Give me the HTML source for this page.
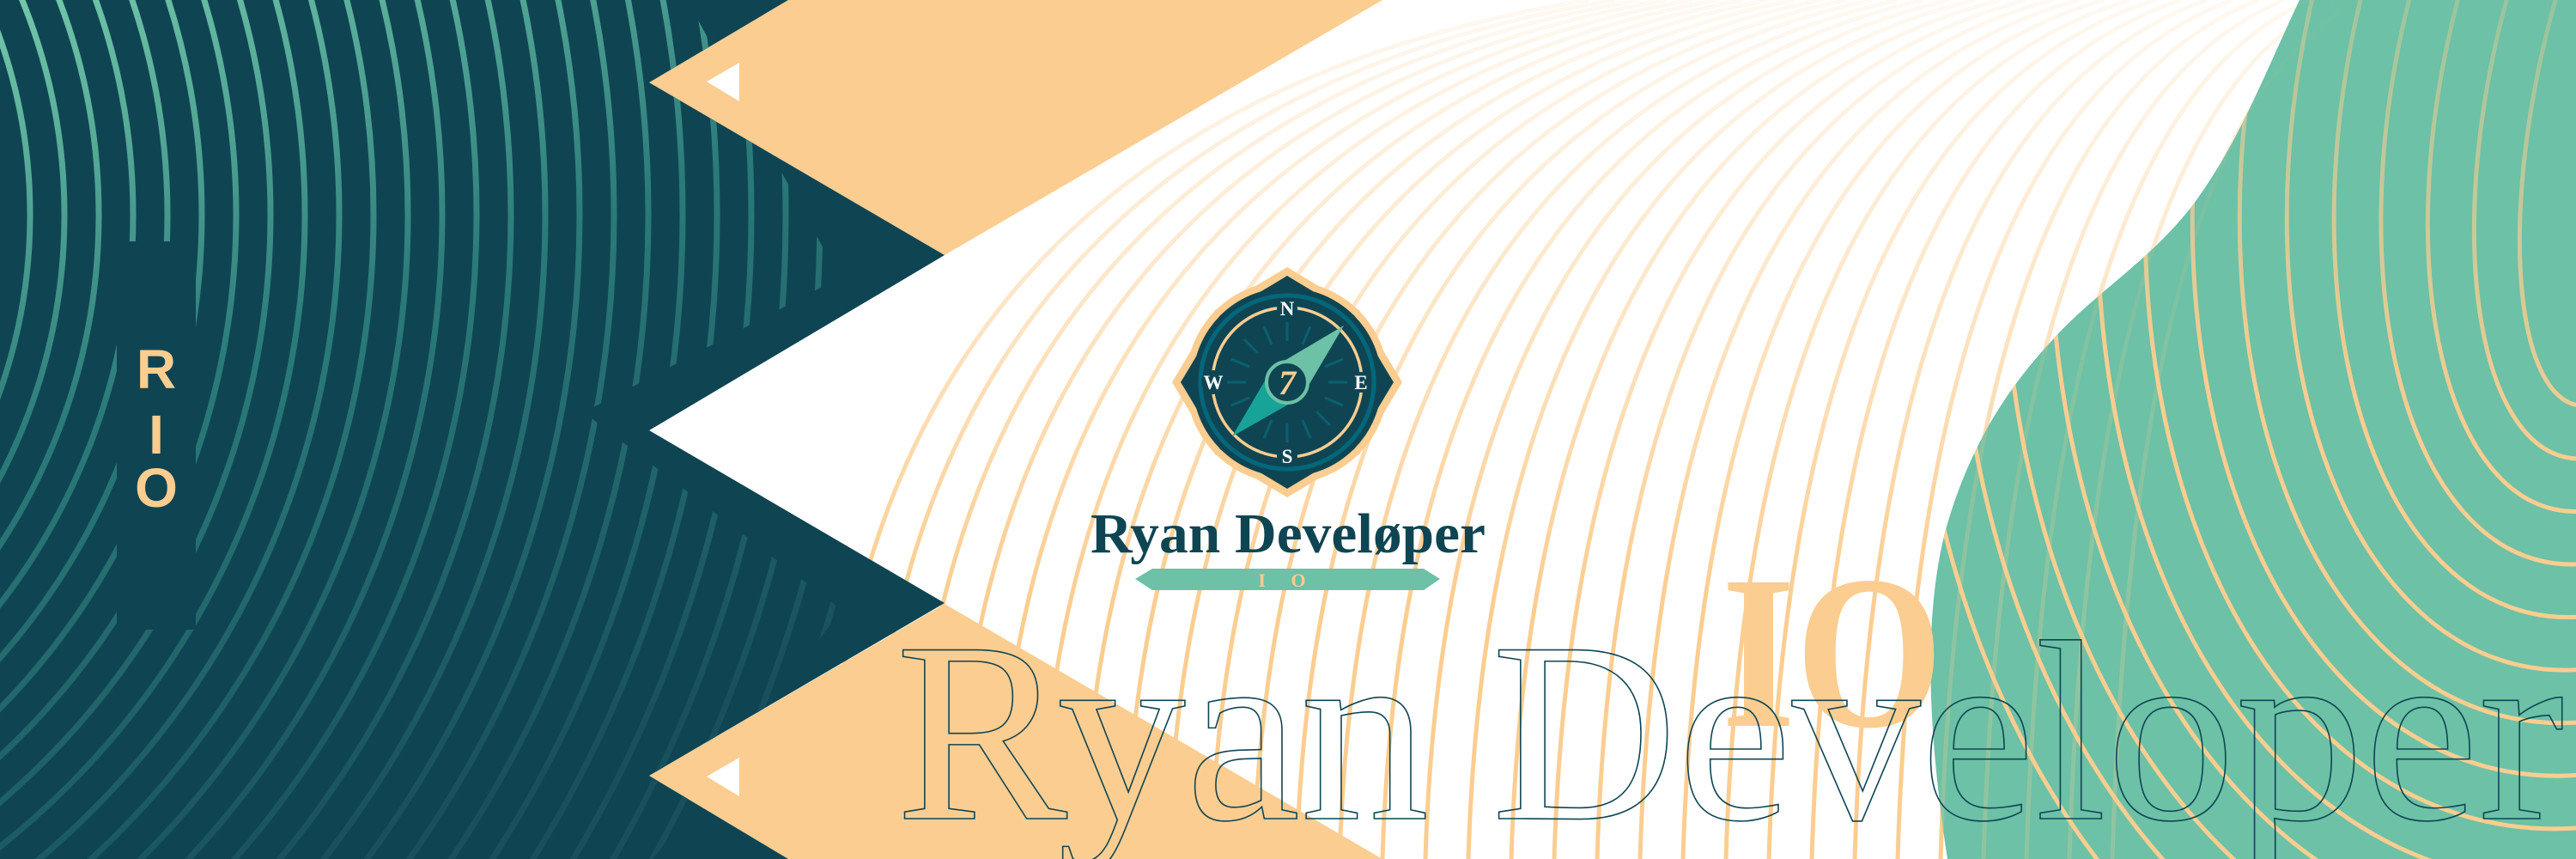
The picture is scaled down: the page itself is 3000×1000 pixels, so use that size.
<!DOCTYPE html>
<html><head><meta charset="utf-8"><style>
html,body{margin:0;padding:0;background:#fff;overflow:hidden;}
svg{display:block;}
</style></head><body>
<svg width="3000" height="1000" viewBox="0 0 3000 1000" xmlns="http://www.w3.org/2000/svg">
<defs>
<linearGradient id="pg" gradientUnits="userSpaceOnUse" x1="0" y1="0" x2="0" y2="700">
<stop offset="0" stop-color="#fbcd90" stop-opacity="0.12"/>
<stop offset="0.5" stop-color="#fbcd90" stop-opacity="0.5"/>
<stop offset="1" stop-color="#fbcd90" stop-opacity="1"/>
</linearGradient>
<linearGradient id="bg2" gradientUnits="userSpaceOnUse" x1="0" y1="0" x2="0" y2="550">
<stop offset="0" stop-color="#fbcd90" stop-opacity="0.25"/>
<stop offset="1" stop-color="#fbcd90" stop-opacity="1"/>
</linearGradient>
<linearGradient id="dg" gradientUnits="userSpaceOnUse" x1="0" y1="0" x2="400" y2="1000">
<stop offset="0" stop-color="#74c9ab"/>
<stop offset="0.45" stop-color="#2b7b7a"/>
<stop offset="1" stop-color="#18505c"/>
</linearGradient>
<clipPath id="blobc"><path d="M2678,0 C2640,80 2610,160 2560,230 C2510,300 2440,340 2391,395 C2330,460 2290,530 2265,620 C2240,720 2245,850 2268,1000 L3000,1000 L3000,0 Z"/></clipPath>
<clipPath id="darkc"><polygon points="0,0 800,0 965,300 965,330 680,480 980,710 800,950 760,1000 0,1000"/></clipPath>
<clipPath id="darkp"><polygon points="0,0 918,0 756,96 1100,297 756,501 1100,702 756,903 918,1000 0,1000"/></clipPath>
<g id="lines" fill="none" stroke="url(#pg)" stroke-width="5">
<path d="M960,1000 C980,350 1360,80 1850,0"/>
<path d="M1010,1000 C1030,350 1401,80 1880,0"/>
<path d="M1060,1000 C1080,350 1442,80 1910,0"/>
<path d="M1110,1000 C1130,350 1483,80 1940,0"/>
<path d="M1160,1000 C1180,350 1524,80 1970,0"/>
<path d="M1210,1000 C1230,350 1565,80 2000,0"/>
<path d="M1260,1000 C1280,350 1606,80 2030,0"/>
<path d="M1310,1000 C1330,350 1647,80 2060,0"/>
<path d="M1360,1000 C1380,350 1688,80 2090,0"/>
<path d="M1410,1000 C1430,350 1729,80 2120,0"/>
<path d="M1460,1000 C1480,350 1770,80 2150,0"/>
<path d="M1510,1000 C1530,350 1811,80 2180,0"/>
<path d="M1560,1000 C1580,350 1852,80 2210,0"/>
<path d="M1610,1000 C1630,350 1893,80 2240,0"/>
<path d="M1660,1000 C1680,350 1934,80 2270,0"/>
<path d="M1710,1000 C1730,350 1975,80 2300,0"/>
<path d="M1760,1000 C1780,350 2016,80 2330,0"/>
<path d="M1810,1000 C1830,350 2057,80 2360,0"/>
<path d="M1860,1000 C1880,350 2098,80 2390,0"/>
<path d="M1910,1000 C1930,350 2139,80 2420,0"/>
<path d="M1960,1000 C1980,350 2180,80 2450,0"/>
<path d="M2010,1000 C2030,350 2221,80 2480,0"/>
<path d="M2060,1000 C2080,350 2262,80 2510,0"/>
<path d="M2110,1000 C2130,350 2303,80 2540,0"/>
<path d="M2160,1000 C2180,350 2344,80 2570,0"/>
<path d="M2210,1000 C2230,350 2385,80 2600,0"/>
<path d="M2260,1000 C2280,350 2426,80 2630,0"/>
<path d="M2310,1000 C2330,350 2467,80 2660,0"/>
<path d="M2360,1000 C2380,350 2508,80 2690,0"/>
<path d="M2410,1000 C2430,350 2549,80 2720,0"/>
<path d="M2460,1000 C2480,350 2590,80 2750,0"/>
</g>
</defs>

<rect width="3000" height="1000" fill="#fff"/>
<use href="#lines"/>

<!-- blob -->
<path d="M2678,0 C2640,80 2610,160 2560,230 C2510,300 2440,340 2391,395 C2330,460 2290,530 2265,620 C2240,720 2245,850 2268,1000 L3000,1000 L3000,0 Z" fill="#6cc1a6"/>
<g clip-path="url(#blobc)">
<g opacity="0.25"><use href="#lines"/></g>
<g fill="none" stroke="url(#bg2)" stroke-width="5">
<g transform="rotate(12 3080 100)">
<ellipse cx="3080" cy="100" rx="125" ry="380"/>
<ellipse cx="3080" cy="100" rx="180" ry="442"/>
<ellipse cx="3080" cy="100" rx="235" ry="504"/>
<ellipse cx="3080" cy="100" rx="290" ry="566"/>
<ellipse cx="3080" cy="100" rx="345" ry="628"/>
<ellipse cx="3080" cy="100" rx="400" ry="690"/>
<ellipse cx="3080" cy="100" rx="455" ry="752"/>
<ellipse cx="3080" cy="100" rx="510" ry="814"/>
<ellipse cx="3080" cy="100" rx="565" ry="876"/>
<ellipse cx="3080" cy="100" rx="620" ry="938"/>
<ellipse cx="3080" cy="100" rx="675" ry="1000"/>
<ellipse cx="3080" cy="100" rx="730" ry="1062"/>
<ellipse cx="3080" cy="100" rx="785" ry="1124"/>
<ellipse cx="3080" cy="100" rx="840" ry="1186"/>
</g>
</g>
</g>

<!-- peach triangles -->
<polygon points="918,0 1610,0 1100,297 756,96" fill="#fbcd90"/>
<polygon points="756,903 1100,703 1610,1000 918,1000" fill="#fbcd90"/>
<polygon points="823,95 861,73 861,118" fill="#fff"/>
<polygon points="823,904 861,882 861,927" fill="#fff"/>

<!-- dark region -->
<polygon points="0,0 918,0 756,96 1100,297 756,501 1100,702 756,903 918,1000 0,1000" fill="#0f4553"/>
<g clip-path="url(#darkp)">
<g clip-path="url(#darkc)" fill="none" stroke="url(#dg)" stroke-width="7">
<circle cx="-585" cy="250" r="620"/><circle cx="-585" cy="250" r="660"/><circle cx="-585" cy="250" r="700"/>
<circle cx="-585" cy="250" r="740"/><circle cx="-585" cy="250" r="780"/><circle cx="-585" cy="250" r="820"/>
<circle cx="-585" cy="250" r="860"/><circle cx="-585" cy="250" r="900"/><circle cx="-585" cy="250" r="940"/>
<circle cx="-585" cy="250" r="980"/><circle cx="-585" cy="250" r="1020"/><circle cx="-585" cy="250" r="1060"/>
<circle cx="-585" cy="250" r="1100"/><circle cx="-585" cy="250" r="1140"/><circle cx="-585" cy="250" r="1180"/>
<circle cx="-585" cy="250" r="1220"/><circle cx="-585" cy="250" r="1260"/><circle cx="-585" cy="250" r="1300"/>
<circle cx="-585" cy="250" r="1340"/><circle cx="-585" cy="250" r="1380"/><circle cx="-585" cy="250" r="1420"/>
<circle cx="-585" cy="250" r="1460"/><circle cx="-585" cy="250" r="1500"/><circle cx="-585" cy="250" r="1540"/>
<circle cx="-585" cy="250" r="1580"/><circle cx="-585" cy="250" r="1620"/><circle cx="-585" cy="250" r="1660"/>
<circle cx="-585" cy="250" r="1700"/>
</g>
</g>

<!-- RIO -->
<rect x="136" y="281" width="92" height="452" fill="#0f4553"/>
<g font-family="Liberation Sans, sans-serif" font-weight="bold" font-size="64" fill="#fbcd90" text-anchor="middle">
<text x="182" y="452">R</text>
<text x="182" y="528">I</text>
<text x="182" y="590">O</text>
</g>

<!-- big text -->
<text x="2005" y="845" font-family="Liberation Serif, serif" font-weight="bold" font-size="255" fill="#fbcd90" textLength="258" lengthAdjust="spacingAndGlyphs">IO</text>
<g font-family="Liberation Serif, serif" font-size="300" fill="none" stroke="#0f4553" stroke-width="1.6">
<text x="1043" y="953">Ryan</text>
<text x="1737" y="953">Developer</text>
</g>

<!-- compass -->
<g transform="translate(1499,445)">
<path d="M0,-134 Q30,-116 84,-84 Q116,-30 134,0 Q116,30 84,84 Q30,116 0,134 Q-30,116 -84,84 Q-116,30 -134,0 Q-116,-30 -84,-84 Q-30,-116 0,-134Z" fill="#fbcd90"/>
<circle r="118" fill="#fbcd90"/>
<path d="M0,-124 Q26,-108 78,-78 Q108,-26 124,0 Q108,26 78,78 Q26,108 0,124 Q-26,108 -78,78 Q-108,26 -124,0 Q-108,-26 -78,-78 Q-26,-108 0,-124Z" fill="#0f4553"/>
<circle r="110" fill="#0f4553"/>
<circle r="101" fill="none" stroke="#02677a" stroke-width="5"/>
<circle r="87" fill="none" stroke="#fbcd90" stroke-width="3.5"/>
<g stroke="#0a6070" stroke-width="3">
<line x1="0" y1="-48" x2="0" y2="-70"/><line x1="0" y1="48" x2="0" y2="70"/>
<line x1="48" y1="0" x2="70" y2="0"/><line x1="-48" y1="0" x2="-70" y2="0"/>
<line x1="18" y1="-44" x2="27" y2="-65"/><line x1="-18" y1="-44" x2="-27" y2="-65"/>
<line x1="18" y1="44" x2="27" y2="65"/><line x1="-18" y1="44" x2="-27" y2="65"/>
<line x1="44" y1="-18" x2="65" y2="-27"/><line x1="-44" y1="-18" x2="-65" y2="-27"/>
<line x1="44" y1="18" x2="65" y2="27"/><line x1="-44" y1="18" x2="-65" y2="27"/>
<line x1="34" y1="-34" x2="50" y2="-50"/><line x1="-34" y1="-34" x2="-50" y2="-50"/>
<line x1="34" y1="34" x2="50" y2="50"/><line x1="-34" y1="34" x2="-50" y2="50"/>
</g>
<g fill="#0f4553"><circle cx="0" cy="-86" r="12"/><circle cx="0" cy="86" r="12"/><circle cx="-86" cy="0" r="14"/><circle cx="86" cy="0" r="12"/></g>
<g font-family="Liberation Serif, serif" font-weight="bold" font-size="23" fill="#fff" text-anchor="middle">
<text x="0" y="-78">N</text><text x="0" y="94">S</text><text x="-86" y="8">W</text><text x="86" y="8">E</text>
</g>
<polygon points="66,-66 17,17 -17,-17" fill="#6cc1a6"/>
<polygon points="-64,63 17,17 -17,-17" fill="#17a398"/>
<circle r="24" fill="#0f4553" stroke="#6cc1a6" stroke-width="4"/>
<text x="0" y="14" font-family="Liberation Serif, serif" font-weight="bold" font-style="italic" font-size="40" fill="#fbcd90" text-anchor="middle">7</text>
</g>

<text x="1270" y="643" font-family="Liberation Serif, serif" font-weight="bold" font-size="66" fill="#0f4553" textLength="460" lengthAdjust="spacingAndGlyphs">Ryan Develøper</text>
<polygon points="1322,674 1342,662 1658,662 1677,674 1658,687 1342,687" fill="#6cc1a6"/>
<text x="1499" y="683" font-family="Liberation Serif, serif" font-weight="bold" font-size="22" fill="#fbcd90" text-anchor="middle" letter-spacing="12">I O</text>
</svg>
</body></html>
